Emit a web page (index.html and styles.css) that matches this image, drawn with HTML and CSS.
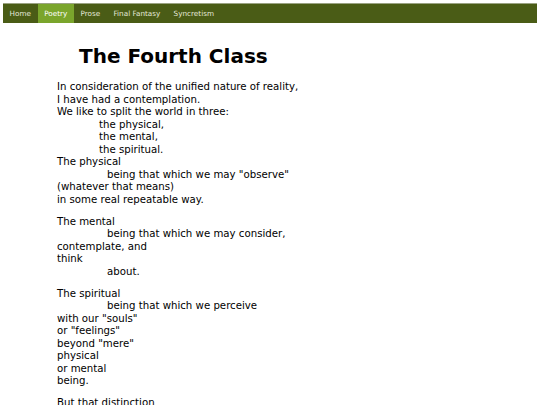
FILE: index.html
```html
<!DOCTYPE html>
<html>
<head>
<meta charset="utf-8">
<title>The Fourth Class</title>
<link rel="stylesheet" href="styles.css">
</head>
<body>
<nav class="nav">
  <a class="nav-item" href="#">Home</a>
  <a class="nav-item active" href="#">Poetry</a>
  <a class="nav-item" href="#">Prose</a>
  <a class="nav-item" href="#">Final Fantasy</a>
  <a class="nav-item" href="#">Syncretism</a>
</nav>
<main class="content">
  <h1 class="title">The Fourth Class</h1>
  <p class="stanza">In consideration of the unified nature of reality,<br>I have had a contemplation.<br>We like to split the world in three:<span class="ind1">the physical,</span><span class="ind1">the mental,</span><span class="ind1">the spiritual.</span>The physical<span class="ind2">being that which we may "observe"</span>(whatever that means)<br>in some real repeatable way.</p>
  <p class="stanza">The mental<span class="ind2">being that which we may consider,</span>contemplate, and<br>think<span class="ind2">about.</span></p>
  <p class="stanza">The spiritual<span class="ind2">being that which we perceive</span>with our "souls"<br>or "feelings"<br>beyond "mere"<br>physical<br>or mental<br>being.</p>
  <p class="stanza">But that distinction</p>
</main>
</body>
</html>
```
FILE: styles.css
```css
html, body {
  margin: 0;
  padding: 0;
  background: #ffffff;
}
body {
  font-family: "DejaVu Sans", Verdana, sans-serif;
  color: #000000;
}
.nav {
  display: flex;
  margin: 3px 3px 0 3px;
  background: #4a5c16;
  border-top: 1px solid #9aa382;
  height: 19px;
}
.nav-item {
  display: flex;
  align-items: center;
  padding: 0 6.6px;
  font-size: 7.25px;
  color: #e4e8d8;
  text-decoration: none;
}
.nav-item.active {
  background: #7aa52c;
  color: #ffffff;
}
.content {
  padding-left: 57px;
}
.title {
  font-size: 20px;
  font-weight: bold;
  margin: 21px 0 13px 22px;
  line-height: 24px;
}
.stanza {
  font-size: 10.2px;
  line-height: 12.55px;
  margin: 0 0 9.2px 0;
}
.ind1 {
  display: block;
  padding-left: 42px;
}
.ind2 {
  display: block;
  padding-left: 50px;
}
```
